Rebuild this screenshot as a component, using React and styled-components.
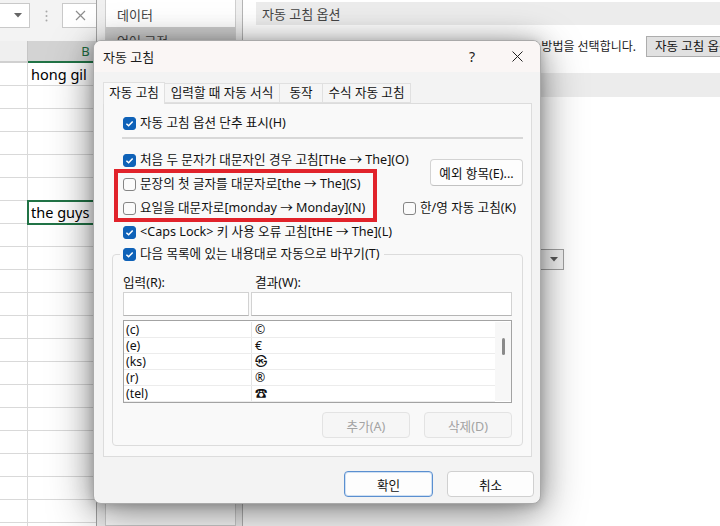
import React from 'react';
import styled, { createGlobalStyle } from 'styled-components';

const GlobalStyle = createGlobalStyle`
  html, body { margin: 0; padding: 0; }
  body {
    width: 720px;
    height: 526px;
    overflow: hidden;
    background: #fff;
    font-family: "Noto Sans", "Noto Sans CJK KR", sans-serif;
  }
  * { box-sizing: border-box; }
`;

const UI_SIZE = '12.6px';

const Stage = styled.div`
  position: relative;
  width: 720px;
  height: 526px;
  overflow: hidden;
`;

/* ---------- excel sheet (back) ---------- */

const Sheet = styled.div`
  position: relative;
  z-index: 0;
  width: 720px;
  height: 526px;
  display: flex;
  flex-direction: column;
  background: #fff;
`;

const FormulaBar = styled.div`
  flex: none;
  height: 41px;
  display: flex;
  align-items: flex-start;
  padding-top: 3px;
  background: #f3f3f3;
`;

const NameBox = styled.div`
  margin-left: -60px;
  width: 90px;
  height: 25px;
  background: #fff;
  border: 1px solid #c9c9c9;
  display: flex;
  align-items: center;
  justify-content: flex-end;
  padding-right: 7px;
`;

const Grip = styled.div`
  width: 32px;
  height: 25px;
  display: flex;
  align-items: center;
  justify-content: center;
`;

const FxBox = styled.div`
  width: 70px;
  height: 25px;
  background: #fff;
  border: 1px solid #c9c9c9;
  display: flex;
  align-items: center;
  padding-left: 12px;
`;

const HeaderRow = styled.div`
  flex: none;
  height: 22px;
  display: flex;
`;

const ColHead = styled.div`
  flex: none;
  width: ${(p) => p.$w}px;
  background: ${(p) => (p.$sel ? '#d3d3d3' : '#efefef')};
  border-right: 1px solid #c6c6c6;
  border-bottom: 2px solid ${(p) => (p.$sel ? '#217346' : '#d0d0d0')};
  color: ${(p) => (p.$sel ? '#1d6a3c' : '#555')};
  font-size: 13px;
  line-height: 20px;
  text-align: center;
`;

const Row = styled.div`
  flex: none;
  height: 23px;
  display: flex;
`;

const Cell = styled.div`
  flex: none;
  width: ${(p) => p.$w}px;
  height: 23px;
  border-right: 1px solid #d9d9d9;
  border-bottom: 1px solid #d9d9d9;
  padding-left: 3px;
  font-size: 14.5px;
  line-height: 22px;
  color: #000;
  white-space: nowrap;
  position: relative;
  outline: ${(p) => (p.$sel ? '2px solid #217346' : 'none')};
  outline-offset: -1px;
  z-index: ${(p) => (p.$sel ? 1 : 0)};
`;

/* ---------- excel options window (middle) ---------- */

const OptionsWindow = styled.div`
  position: absolute;
  left: 96px;
  top: 0;
  right: 0;
  bottom: 0;
  z-index: 1;
  display: flex;
  background: #f0f0f0;
  border-left: 1px solid #a3a3a3;
`;

const Nav = styled.div`
  flex: none;
  margin-left: 8px;
  width: 131px;
  background: #fff;
  border: 1px solid #cfcfcf;
  border-top: none;
  padding-top: 1px;
`;

const NavItem = styled.div`
  height: 26px;
  padding-left: 11px;
  display: flex;
  align-items: center;
  font-size: 13px;
  color: #444;
  background: ${(p) => (p.$active ? '#cdcdcd' : 'transparent')};
`;

const OptionsContent = styled.div`
  flex: 1;
  margin-left: 6px;
  border-left: 1px solid #b5b5b5;
  background: #fff;
  padding-left: 13px;
  display: flex;
  flex-direction: column;
  overflow: hidden;
`;

const SectionBar = styled.div`
  flex: none;
  height: ${(p) => p.$h}px;
  margin-top: ${(p) => p.$mt || 0}px;
  background: #ececec;
  padding-left: 6px;
  display: flex;
  align-items: center;
  font-size: 13px;
  color: #444;
`;

const IntroRow = styled.div`
  flex: none;
  height: 48px;
  padding-top: 11px;
  display: grid;
  grid-template-columns: 380px auto;
  column-gap: 10px;
  align-items: start;
`;

const IntroText = styled.div`
  text-align: right;
  white-space: nowrap;
  font-size: 12px;
  line-height: 21px;
  color: #222;
`;

const ClassicButton = styled.div`
  height: 21px;
  padding: 0 8px;
  background: #e1e1e1;
  border: 1px solid #adadad;
  font-size: 12.5px;
  line-height: 19px;
  color: #111;
  white-space: nowrap;
`;

const HiddenList = styled.div`
  flex: none;
  padding-top: 8px;
  display: flex;
  flex-direction: column;
`;

const DropRow = styled.div`
  flex: none;
  height: 21px;
  display: grid;
  grid-template-columns: 128px 180px;
  align-items: center;
  font-size: 12.5px;
  color: #222;
`;

const Select = styled.div`
  height: 21px;
  border: 1px solid #a2a2a2;
  background: #f4f4f4;
  display: flex;
  align-items: center;
  justify-content: flex-end;
  padding-right: 5px;
`;

/* ---------- autocorrect dialog (front) ---------- */

const Dialog = styled.div`
  position: absolute;
  left: 93px;
  top: 40px;
  z-index: 2;
  width: 448px;
  display: flex;
  flex-direction: column;
  background: #f3f3f3;
  border: 1px solid #a9a9a9;
  border-radius: 8px;
  overflow: hidden;
  box-shadow: 0 12px 46px rgba(0, 0, 0, 0.4), 0 0 26px rgba(0, 0, 0, 0.2),
    0 2px 10px rgba(0, 0, 0, 0.16);
  font-size: ${UI_SIZE};
  color: #111;
`;

const TitleBar = styled.div`
  flex: none;
  height: 31px;
  display: flex;
  align-items: center;
  padding-left: 9px;
  background: #faf6f5;
`;

const Title = styled.div`
  flex: 1;
  font-size: 13px;
  color: #1b1b1b;
`;

const CaptionButton = styled.div`
  width: ${(p) => p.$w}px;
  height: 31px;
  display: flex;
  align-items: center;
  justify-content: center;
  font-size: 14px;
  color: #222;
`;

const Body = styled.div`
  padding: 10px 8px 0 9px;
`;

const TabStrip = styled.div`
  height: 21px;
  display: flex;
  align-items: flex-end;
`;

const Tab = styled.div`
  flex: none;
  width: ${(p) => p.$w}px;
  height: ${(p) => (p.$active ? 22 : 20)}px;
  margin-bottom: ${(p) => (p.$active ? -1 : 0)}px;
  background: ${(p) => (p.$active ? '#f9f9f9' : '#f5f5f5')};
  border: 1px solid #e0e0e0;
  border-bottom: ${(p) => (p.$active ? 'none' : '1px solid #e0e0e0')};
  border-left: ${(p) => (p.$first ? '1px solid #e0e0e0' : 'none')};
  text-align: center;
  font-size: ${UI_SIZE};
  line-height: ${(p) => (p.$active ? 20 : 18)}px;
  white-space: nowrap;
  position: relative;
  z-index: ${(p) => (p.$active ? 2 : 1)};
`;

const Panel = styled.div`
  position: relative;
  background: #f9f9f9;
  border: 1px solid #dcdcdc;
  padding: 7px 8px 10px 8px;
`;

const TopOptions = styled.div`
  padding-left: 11px;
`;

const Separator = styled.div`
  height: 2px;
  margin: 2px 0 9px -1px;
  background: #d8d8d8;
`;

const OptionsGrid = styled.div`
  display: grid;
  grid-template-columns: minmax(0, 1fr) 120px;
  grid-auto-rows: 24px;
`;

const CheckLabel = styled.label`
  display: flex;
  align-items: center;
  gap: 4px;
  height: ${(p) => p.$h || 24}px;
  font-size: ${UI_SIZE};
  line-height: 16px;
  color: #111;
  white-space: nowrap;
  grid-column: ${(p) => p.$col || 'auto'};
  grid-row: ${(p) => p.$row || 'auto'};
`;

const Box = styled.span`
  flex: none;
  width: 13px;
  height: 13px;
  border-radius: 3px;
  display: inline-flex;
  align-items: center;
  justify-content: center;
  background: ${(p) => (p.$on ? '#0f62b8' : '#fbfbfb')};
  border: 1px solid ${(p) => (p.$on ? '#0f62b8' : '#858585')};
`;

const ExceptButton = styled.div`
  grid-column: 2;
  grid-row: 1 / span 2;
  justify-self: end;
  align-self: center;
  width: 93px;
  height: 27px;
  display: flex;
  align-items: center;
  justify-content: center;
  background: #fdfdfd;
  border: 1px solid #d3d3d3;
  border-bottom-color: #c2c2c2;
  border-radius: 4px;
  font-size: ${UI_SIZE};
  white-space: nowrap;
`;

const Highlight = styled.div`
  position: absolute;
  left: 10px;
  top: 65px;
  width: 263px;
  height: 53px;
  border: 4px solid #e1232b;
  pointer-events: none;
`;

const Group = styled.fieldset`
  margin: 0;
  padding: 11px 10px 7px 10px;
  border: 1px solid #dcdcdc;
  border-radius: 4px;
  min-width: 0;
`;

const Legend = styled.legend`
  padding: 0 5px 0 3px;
  margin-left: -3px;
`;

const FieldGrid = styled.div`
  display: grid;
  grid-template-columns: 126px 1fr;
  column-gap: 2px;
`;

const FieldLabel = styled.div`
  height: 17px;
  font-size: ${UI_SIZE};
  line-height: 16px;
  padding-left: ${(p) => p.$pad || 0}px;
`;

const TextInput = styled.div`
  height: 24px;
  background: #fff;
  border: 1px solid #d2d2d2;
  border-bottom-color: #b5b5b5;
`;

const List = styled.div`
  margin-top: 4px;
  height: 83px;
  border: 1px solid #a3a3a3;
  padding: 1px 0;
  display: flex;
  background: #fff;
`;

const ListRows = styled.div`
  flex: 1;
`;

const ListRow = styled.div`
  height: 16px;
  display: grid;
  grid-template-columns: 128px 1fr;
  border-bottom: 1px solid #ececec;
  font-size: 12.3px;
  line-height: 15px;
`;

const ListCell = styled.div`
  padding-left: ${(p) => p.$pad}px;
  border-right: ${(p) => (p.$divider ? '1px solid #e4e4e4' : 'none')};
  font-family: "Noto Sans", "Noto Sans CJK KR", "DejaVu Sans", sans-serif;
  font-weight: ${(p) => (p.$bold ? 700 : 400)};
`;

const ScrollTrack = styled.div`
  flex: none;
  width: 16px;
  background: #f7f7f7;
  padding-top: 16px;
  display: flex;
  justify-content: center;
`;

const ScrollThumb = styled.div`
  width: 3px;
  height: 17px;
  border-radius: 2px;
  background: #8a8a8a;
`;

const ButtonRow = styled.div`
  display: flex;
  justify-content: flex-end;
  gap: 14px;
  margin-top: ${(p) => p.$mt || 0}px;
  padding: ${(p) => p.$pad || '0'};
`;

const PushButton = styled.div`
  width: ${(p) => p.$w}px;
  height: 26px;
  display: flex;
  align-items: center;
  justify-content: center;
  border-radius: 4px;
  font-size: ${UI_SIZE};
  background: ${(p) => (p.$disabled ? '#f6f6f6' : '#fdfdfd')};
  color: ${(p) => (p.$disabled ? '#a3a3a3' : '#111')};
  border: 1px solid
    ${(p) => (p.$default ? '#5a8fd0' : p.$disabled ? '#e3e3e3' : '#d0d0d0')};
  box-shadow: ${(p) => (p.$default ? 'inset 0 0 0 1px #cfe0f3' : 'none')};
`;

const CheckMark = () => (
  <svg width="9" height="9" viewBox="0 0 9 9">
    <path d="M1.4 4.7 L3.6 6.8 L7.7 2.4" fill="none" stroke="#fff" strokeWidth="1.5" />
  </svg>
);

const Check = ({ on, children, ...rest }) => (
  <CheckLabel {...rest}>
    <Box $on={on}>{on && <CheckMark />}</Box>
    {children}
  </CheckLabel>
);

const DownArrow = ({ color = '#666' }) => (
  <svg width="8" height="5" viewBox="0 0 8 5">
    <path d="M0 0 H8 L4 4.5 Z" fill={color} />
  </svg>
);

const sheetRows = [
  ['', 'hong gil'],
  ['', ''],
  ['', ''],
  ['', ''],
  ['', ''],
  ['', ''],
  ['', 'the guys', true],
  ...Array.from({ length: 14 }, () => ['', '']),
];

const entries = [
  ['(c)', '©'],
  ['(e)', '€'],
  ['(ks)', '㉿'],
  ['(r)', '®'],
  ['(tel)', '☎', true],
];

const hiddenOptions = [
  '대문자로 된 단어 무시(U)',
  '숫자가 포함된 단어 무시(B)',
  '인터넷 및 파일 주소 무시(R)',
  '반복되는 단어에 플래그 지정(R)',
  '영어 이외의 언어에서 대문자 악센트 사용(U)',
  '주 사전만 사용(I)',
];

export default function App() {
  return (
    <>
      <GlobalStyle />
      <Stage>
        <Sheet>
          <FormulaBar>
            <NameBox>
              <DownArrow />
            </NameBox>
            <Grip>
              <svg width="3" height="12" viewBox="0 0 3 12">
                <circle cx="1.5" cy="1.5" r="1" fill="#a8a8a8" />
                <circle cx="1.5" cy="6" r="1" fill="#a8a8a8" />
                <circle cx="1.5" cy="10.5" r="1" fill="#a8a8a8" />
              </svg>
            </Grip>
            <FxBox>
              <svg width="11" height="11" viewBox="0 0 11 11">
                <path d="M1 1 L10 10 M10 1 L1 10" stroke="#8d8d8d" strokeWidth="1.2" />
              </svg>
            </FxBox>
          </FormulaBar>
          <HeaderRow>
            <ColHead $w={28} />
            <ColHead $w={116} $sel>B</ColHead>
            <ColHead $w={116}>C</ColHead>
          </HeaderRow>
          {sheetRows.map(([a, b, sel], i) => (
            <Row key={i}>
              <Cell $w={28}>{a}</Cell>
              <Cell $w={116} $sel={sel}>{b}</Cell>
              <Cell $w={116} />
            </Row>
          ))}
        </Sheet>

        <OptionsWindow>
          <Nav>
            <NavItem>데이터</NavItem>
            <NavItem $active>언어 교정</NavItem>
            <NavItem>저장</NavItem>
            <NavItem>언어</NavItem>
            <NavItem>접근성</NavItem>
            <NavItem>고급</NavItem>
          </Nav>
          <OptionsContent>
            <SectionBar $h={23} $mt={2}>자동 고침 옵션</SectionBar>
            <IntroRow>
              <IntroText>Excel에서 입력할 때 텍스트를 수정하고 서식을 지정하는 방법을 선택합니다.</IntroText>
              <ClassicButton>자동 고침 옵션(A)...</ClassicButton>
            </IntroRow>
            <SectionBar $h={24}>Microsoft Office 프로그램에서 맞춤법 검사</SectionBar>
            <HiddenList>
              {hiddenOptions.map((t) => (
                <Check key={t} on>
                  {t}
                </Check>
              ))}
            </HiddenList>
            <DropRow>
              <span>사전 언어(L):</span>
              <Select>
                <DownArrow color="#5a5a5a" />
              </Select>
            </DropRow>
          </OptionsContent>
        </OptionsWindow>

        <Dialog>
          <TitleBar>
            <Title>자동 고침</Title>
            <CaptionButton $w={44}>?</CaptionButton>
            <CaptionButton $w={46}>
              <svg width="11" height="11" viewBox="0 0 11 11">
                <path d="M0.5 0.5 L10.5 10.5 M10.5 0.5 L0.5 10.5" stroke="#222" strokeWidth="1" />
              </svg>
            </CaptionButton>
          </TitleBar>
          <Body>
            <TabStrip>
              <Tab $w={62} $active $first>자동 고침</Tab>
              <Tab $w={115}>입력할 때 자동 서식</Tab>
              <Tab $w={43}>동작</Tab>
              <Tab $w={88}>수식 자동 고침</Tab>
            </TabStrip>
            <Panel>
              <TopOptions>
                <Check on>자동 고침 옵션 단추 표시(H)</Check>
                <Separator />
                <OptionsGrid>
                  <Check on $col={1} $row={1}>처음 두 문자가 대문자인 경우 고침[THe → The](O)</Check>
                  <ExceptButton>예외 항목(E)...</ExceptButton>
                  <Check $col={1} $row={2}>문장의 첫 글자를 대문자로[the → The](S)</Check>
                  <Check $col={1} $row={3}>요일을 대문자로[monday → Monday](N)</Check>
                  <Check $col={2} $row={3}>한/영 자동 고침(K)</Check>
                  <Check on $col={1} $row={4}>&lt;Caps Lock&gt; 키 사용 오류 고침[tHE → The](L)</Check>
                </OptionsGrid>
              </TopOptions>
              <Group>
                <Legend>
                  <Check on $h={20}>다음 목록에 있는 내용대로 자동으로 바꾸기(T)</Check>
                </Legend>
                <FieldGrid>
                  <FieldLabel>입력(R):</FieldLabel>
                  <FieldLabel $pad={4}>결과(W):</FieldLabel>
                </FieldGrid>
                <FieldGrid>
                  <TextInput />
                  <TextInput />
                </FieldGrid>
                <List>
                  <ListRows>
                    {entries.map(([k, v, bold]) => (
                      <ListRow key={k}>
                        <ListCell $pad={2} $divider>{k}</ListCell>
                        <ListCell $pad={3} $bold={bold}>{v}</ListCell>
                      </ListRow>
                    ))}
                  </ListRows>
                  <ScrollTrack>
                    <ScrollThumb />
                  </ScrollTrack>
                </List>
                <ButtonRow $mt={9}>
                  <PushButton $w={88} $disabled>추가(A)</PushButton>
                  <PushButton $w={88} $disabled>삭제(D)</PushButton>
                </ButtonRow>
              </Group>
              <Highlight />
            </Panel>
          </Body>
          <ButtonRow $pad="14px 6px 6px 0">
            <PushButton $w={89} $default>확인</PushButton>
            <PushButton $w={87}>취소</PushButton>
          </ButtonRow>
        </Dialog>
      </Stage>
    </>
  );
}
